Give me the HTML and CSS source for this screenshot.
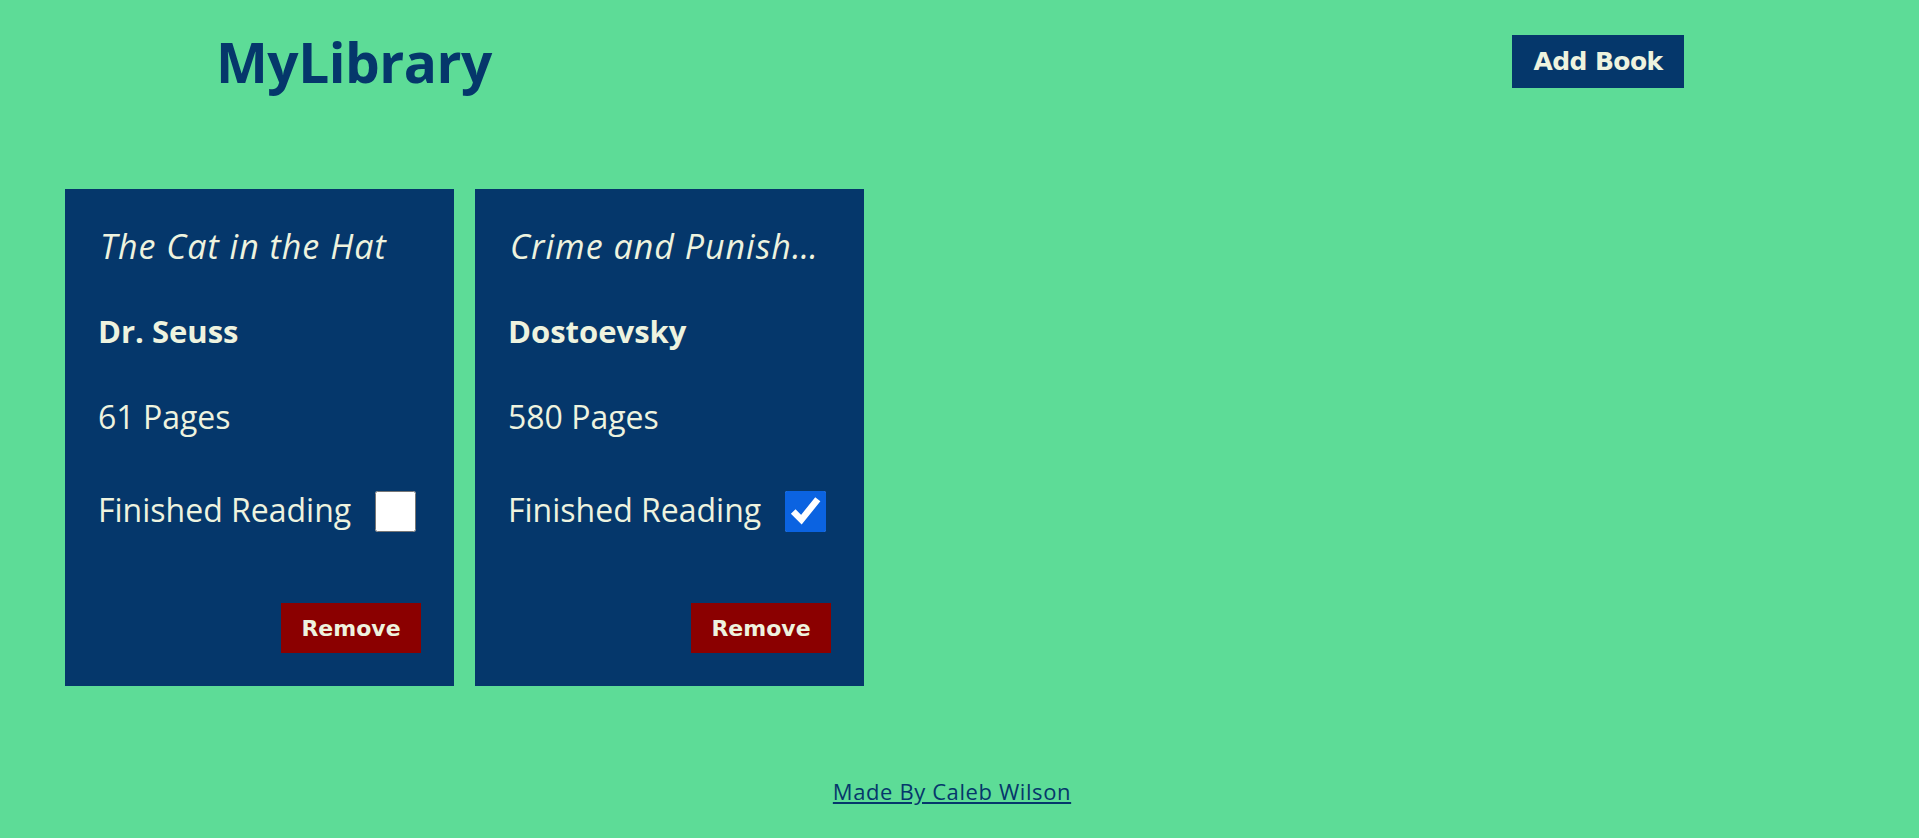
FILE: index.html
```html
<!DOCTYPE html>
<html lang="en">
<head>
<meta charset="utf-8">
<title>MyLibrary</title>
<link rel="stylesheet" href="styles.css">
</head>
<body>
<header class="top">
  <h1 class="logo">MyLibrary</h1>
  <button class="add-btn" type="button">Add Book</button>
</header>
<main class="library">
  <article class="card">
    <p class="card-title">The Cat in the Hat</p>
    <p class="card-author">Dr. Seuss</p>
    <p class="card-pages">61 Pages</p>
    <label class="card-read"><span>Finished Reading</span><input class="read-box" type="checkbox"></label>
    <button class="remove-btn" type="button">Remove</button>
  </article>
  <article class="card">
    <p class="card-title">Crime and Punishment</p>
    <p class="card-author">Dostoevsky</p>
    <p class="card-pages">580 Pages</p>
    <label class="card-read"><span>Finished Reading</span><input class="read-box" type="checkbox" checked></label>
    <button class="remove-btn" type="button">Remove</button>
  </article>
</main>
<footer class="foot">
  <a class="credit" href="#">Made By Caleb Wilson</a>
</footer>
</body>
</html>
```

FILE: styles.css
```css
html, body {
  margin: 0;
  padding: 0;
}

body {
  background: #5ddc97;
  font-family: "Open Sans", "Noto Sans", sans-serif;
  color: #05376b;
  padding-right: 15px;
}

.top {
  display: flex;
  justify-content: space-between;
  align-items: center;
  padding: 35px 220px 0 216px;
  height: 53px;
}

.logo {
  margin: 0;
  font-size: 55px;
  font-weight: 700;
  line-height: 53px;
  color: #05376b;
  letter-spacing: -0.5px;
}

.add-btn {
  width: 172px;
  height: 53px;
  border: none;
  background: #05376b;
  color: #eef3df;
  font-family: "DejaVu Sans", sans-serif;
  font-weight: 700;
  font-size: 25px;
  letter-spacing: -0.6px;
  padding: 0;
  cursor: pointer;
}

.library {
  display: grid;
  grid-template-columns: repeat(auto-fill, 389px);
  gap: 21px;
  padding: 0 65px;
  margin-top: 101px;
}

.card {
  background: #05376b;
  color: #eef3df;
  height: 497px;
  box-sizing: border-box;
  padding: 35px 33px 33px 33px;
  display: flex;
  flex-direction: column;
}

.card p {
  margin: 0;
  font-size: 32px;
  line-height: 44px;
}

.card .card-title {
  font-style: italic;
  font-size: 34px;
  letter-spacing: 1px;
  white-space: nowrap;
  overflow: hidden;
  text-overflow: ellipsis;
  padding-left: 2px;
}

.card .card-author {
  font-weight: 700;
  font-size: 31px;
  margin-top: 41px;
}

.card .card-pages {
  margin-top: 42px;
}

.card-read {
  display: flex;
  justify-content: space-between;
  align-items: center;
  font-size: 32px;
  line-height: 44px;
  margin-top: 49px;
}

.read-box {
  width: 41px;
  height: 41px;
  margin: 2px 5px 0 0;
  accent-color: #0b63e1;
}

.remove-btn {
  margin-top: auto;
  align-self: flex-end;
  width: 140px;
  height: 50px;
  border: none;
  background: #8b0000;
  color: #eef3df;
  font-family: "DejaVu Sans", sans-serif;
  font-weight: 700;
  font-size: 22px;
  padding: 0;
  cursor: pointer;
}

.foot {
  text-align: center;
  margin-top: 90px;
}

.credit {
  color: #05376b;
  font-size: 22px;
  letter-spacing: 0.6px;
  line-height: 30px;
}
```
